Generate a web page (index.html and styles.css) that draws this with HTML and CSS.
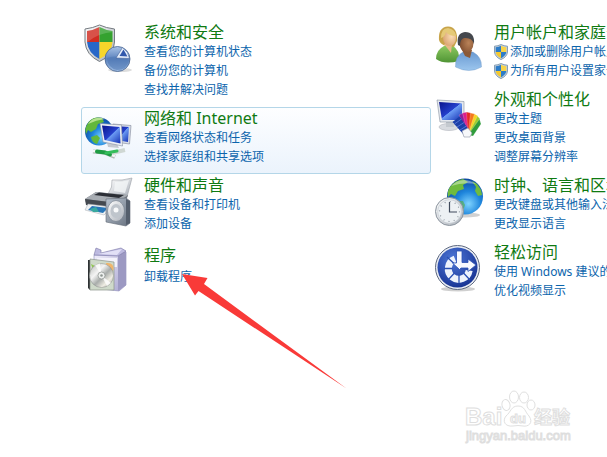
FILE: index.html
```html
<!DOCTYPE html>
<html lang="zh-CN">
<head>
<meta charset="utf-8">
<meta name="viewport" content="width=device-width, initial-scale=1">
<title>控制面板</title>
<link rel="stylesheet" href="styles.css">
</head>
<body>
<svg class="defs" width="0" height="0" aria-hidden="true">
  <defs>
    <radialGradient id="sea" cx=".6" cy=".7" r=".75"><stop offset="0" stop-color="#7fd4ff"/><stop offset=".45" stop-color="#1f86dc"/><stop offset="1" stop-color="#0b3f96"/></radialGradient>
    <linearGradient id="screen" x1="0" y1="0" x2="1" y2="1"><stop offset="0" stop-color="#0a128c"/><stop offset=".5" stop-color="#2440cc"/><stop offset=".52" stop-color="#6c9cf4"/><stop offset="1" stop-color="#1430b4"/></linearGradient>
    <linearGradient id="silver" x1="0" y1="0" x2="1" y2="1"><stop offset="0" stop-color="#ffffff"/><stop offset="1" stop-color="#a9afb8"/></linearGradient>
    <linearGradient id="steel" x1="0" y1="0" x2="1" y2="1"><stop offset="0" stop-color="#b9c3cf"/><stop offset="1" stop-color="#67717f"/></linearGradient>
    <linearGradient id="pie" x1="0" y1="0" x2="0" y2="1"><stop offset="0" stop-color="#a9c3e6"/><stop offset=".5" stop-color="#5b82bd"/><stop offset="1" stop-color="#9dbbe2"/></linearGradient>
    <linearGradient id="lilac" x1="0" y1="0" x2="1" y2="1"><stop offset="0" stop-color="#f1effc"/><stop offset="1" stop-color="#a9a6d0"/></linearGradient>
    <linearGradient id="disc" x1="0" y1="0" x2="1" y2="1"><stop offset="0" stop-color="#b4b8b4"/><stop offset=".35" stop-color="#f4f4f4"/><stop offset=".55" stop-color="#a8acaa"/><stop offset=".75" stop-color="#eeece2"/><stop offset="1" stop-color="#999a98"/></linearGradient>
    <radialGradient id="access" cx=".4" cy=".3" r=".8"><stop offset="0" stop-color="#4e78d8"/><stop offset="1" stop-color="#122c8c"/></radialGradient>
    <linearGradient id="green" x1="0" y1="0" x2="0" y2="1"><stop offset="0" stop-color="#8cc860"/><stop offset="1" stop-color="#4f9434"/></linearGradient>
    <linearGradient id="blue" x1="0" y1="0" x2="0" y2="1"><stop offset="0" stop-color="#6a9ad2"/><stop offset="1" stop-color="#9cc6ee"/></linearGradient>
    <radialGradient id="skin" cx=".65" cy=".4" r=".7"><stop offset="0" stop-color="#fbdcb4"/><stop offset="1" stop-color="#d8a270"/></radialGradient>
    <radialGradient id="tan" cx=".65" cy=".5" r=".7"><stop offset="0" stop-color="#b98258"/><stop offset="1" stop-color="#7c4a2c"/></radialGradient>
    <clipPath id="shield-clip"><path d="M15.500 3Q21 6 28.500 7V18Q28 29 15.500 35Q4 29 3 18V7Q10 6 15.500 3Z"/></clipPath>
    <symbol id="uac" viewBox="0 0 14 16">
      <path d="M7 .5Q10 2 13.500 2.200V8Q13 13 7 15.600Q1 13 .5 8V2.200Q4 2 7 .5Z" fill="#c4d0dc" stroke="#6f8ba4" stroke-width=".8"/>
      <path d="M7 1.800V8H1.700V3.300Q5 3 7 1.800Z" fill="#2d7cc8"/>
      <path d="M7 1.800V8H12.300V3.300Q9 3 7 1.800Z" fill="#f8d448"/>
      <path d="M1.700 8H7V14.200Q2.300 12 1.700 8Z" fill="#f5c92e"/>
      <path d="M12.300 8H7V14.200Q11.700 12 12.300 8Z" fill="#2d7cc8"/>
    </symbol>
  </defs>
</svg>

<main class="panel">
  <div class="column">
    <section class="category">
      <svg class="icon" viewBox="0 0 48 48" aria-hidden="true">
        <ellipse cx="36" cy="46" rx="12" ry="2" fill="#bbb" opacity=".5"/>
        <path d="M15.500 1Q22 4 30.500 5V18Q30 31 15.500 37.500Q2 31 1 18V5Q9 4 15.500 1Z" fill="url(#silver)" stroke="#757b81" stroke-width="1"/>
        <g clip-path="url(#shield-clip)">
          <path d="M0 0H15.500V18H0Z" fill="#d02c22"/><path d="M15.500 0H31V18H15.500Z" fill="#35a22f"/>
          <path d="M0 18H15.500V38H0Z" fill="#2867c8"/><path d="M15.500 18H31V38H15.500Z" fill="#f6d62a"/>
          <path d="M0 0H31V8Q14 8 0 21Z" fill="#fff" opacity=".18"/>
        </g>
        <circle cx="33.500" cy="35" r="12.500" fill="url(#pie)" stroke="#48658f" stroke-width=".8"/>
        <path d="M23 34Q32 30 45 36Q43 46 33 46Q24 44 23 34Z" fill="#4c75b2" opacity=".5"/>
        <path d="M32 34L38.500 23.500Q45 28 45.500 34.500Z" fill="#e7effa" stroke="#425f9a" stroke-width=".6"/>
        <path d="M35.500 32L39.500 25.500L43.500 32.500Z" fill="#3158ac"/>
      </svg>
      <div class="body">
        <h2><a href="#">系统和安全</a></h2>
        <ul>
          <li><a href="#">查看您的计算机状态</a></li>
          <li><a href="#">备份您的计算机</a></li>
          <li><a href="#">查找并解决问题</a></li>
        </ul>
      </div>
    </section>

    <section class="category is-hot">
      <svg class="icon" viewBox="0 0 48 48" aria-hidden="true">
        <circle cx="15" cy="21.500" r="14" fill="url(#sea)"/>
        <path d="M4 13Q9 6 18 8L20 12L14 14L12 19L7 22L4 20L2 24Q0 19 4 13Z" fill="#62b83c"/>
        <path d="M7 27L13 25L16 28L13 34Q8 33 7 27Z" fill="#62b83c"/>
        <path d="M4 14Q10 5 21 9Q12 10 4 14Z" fill="#d9f4b4" opacity=".7"/>
        <path d="M29 14L47 15.500L45.500 34L31 32Z" fill="#d8dde8" stroke="#7f8798" stroke-width=".6"/>
        <path d="M31 16L45 17L44 32L32 30Z" fill="url(#screen)"/>
        <path d="M23 33L33 34L35 38L24 37Z" fill="#c5cad1"/>
        <path d="M16 13.500L37.500 15L38.500 36L19 32Z" fill="#edf0f5" stroke="#858da0" stroke-width=".6"/>
        <path d="M18 15.500L35.800 17L36.500 33.500L20.500 30Z" fill="url(#screen)"/>
        <path d="M9 41.500L20 42.500L31 47" fill="none" stroke="#b4bbb8" stroke-width="4"/>
        <path d="M9 41L20 42L31 46" fill="none" stroke="#f6f8f7" stroke-width="2.500"/>
        <path d="M13 41.500L21 42.500L26 44.500" fill="none" stroke="#1f9c44" stroke-width="4" stroke-linecap="round"/>
        <path d="M28 43L41 40" stroke="#cfd7d3" stroke-width="4"/>
        <path d="M22 43L33 41" stroke="#35bd5b" stroke-width="3" stroke-linecap="round"/>
      </svg>
      <div class="body">
        <h2><a href="#">网络和 Internet</a></h2>
        <ul>
          <li><a href="#">查看网络状态和任务</a></li>
          <li><a href="#">选择家庭组和共享选项</a></li>
        </ul>
      </div>
    </section>

    <section class="category">
      <svg class="icon" viewBox="0 0 48 48" aria-hidden="true">
        <path d="M28 3Q38 4 48 1L43 20L24 17Q29 10 28 3Z" fill="url(#silver)" stroke="#9a9fa6" stroke-width=".6"/>
        <path d="M31 5Q38 5 45 3L41 16L30 14Z" fill="#f4f6f8" opacity=".8"/>
        <path d="M1 22L12 15L44 18L40 30L22 32L2 26Z" fill="#777c83"/>
        <path d="M1 22L12 15L44 18L33 26Z" fill="#a8adb3"/>
        <path d="M10 18L15 15.500L40 18L35 21Z" fill="#2c2f36"/>
        <path d="M1 22L33 26L32 36L2 28Z" fill="#444950"/>
        <path d="M4 27L28 30L20 38L1 33Z" fill="#f0f2f4" stroke="#a5abb0" stroke-width=".5"/>
        <path d="M8 29L24 31L19 36L4 33Z" fill="#2876b8"/>
        <path d="M6 32L12 30L15 35L9 35Z" fill="#39a9a0"/>
        <path d="M22 22L42 21L46 24V46L42 49L22 45Z" fill="url(#steel)" stroke="#616a76" stroke-width=".6"/>
        <path d="M42 22L46 24V46L42 48Z" fill="#545e6c"/>
        <ellipse cx="32" cy="34" rx="8.500" ry="10.500" fill="url(#silver)" stroke="#78828f" stroke-width=".7"/>
        <ellipse cx="32" cy="34" rx="5.500" ry="7" fill="#bfc5cc"/>
        <circle cx="32" cy="33" r="2.500" fill="#f9fafb"/>
      </svg>
      <div class="body">
        <h2><a href="#">硬件和声音</a></h2>
        <ul>
          <li><a href="#">查看设备和打印机</a></li>
          <li><a href="#">添加设备</a></li>
        </ul>
      </div>
    </section>

    <section class="category is-short">
      <svg class="icon" viewBox="0 0 48 48" aria-hidden="true">
        <path d="M10 8L33 8L42 5V38L35 44L10 41Z" fill="url(#lilac)" stroke="#8c89b8" stroke-width=".6"/>
        <path d="M34 9L42 4V38L34 44Z" fill="#9c99c2"/>
        <path d="M10 8L12 1L17 3V6L37 1L42 4L34 9Z" fill="#bdbae0" stroke="#7a77a6" stroke-width=".6"/>
        <path d="M14 7L38 2L33 8Z" fill="#e2e0f6"/>
        <path d="M13 11H33V20H13Z" fill="#f4f3fc"/>
        <path d="M4 13L6 13V43L4 41Z" fill="#2d3133"/>
        <path d="M6 12L30 15V43L6 43Z" fill="#cfdaca" stroke="#8b948b" stroke-width=".7"/>
        <path d="M22 16Q31 15 29 24L23 22Z" fill="#f0b56c"/>
        <path d="M7 17L13 20L10 25Z" fill="#8fc94f"/>
        <circle cx="17.500" cy="28.500" r="12" fill="url(#disc)" stroke="#868b88" stroke-width=".5"/>
        <path d="M17.500 28.500L11 18L16 16.500Z" fill="#fff" opacity=".8"/>
        <path d="M17.500 28.500L27 36L23 39Z" fill="#fff" opacity=".8"/>
        <circle cx="17.500" cy="28.500" r="3.500" fill="#eff1ef" stroke="#7b817d" stroke-width=".6"/>
        <circle cx="17.500" cy="28.500" r="1.300" fill="#8f9792"/>
      </svg>
      <div class="body">
        <h2><a href="#">程序</a></h2>
        <ul>
          <li><a href="#">卸载程序</a></li>
        </ul>
      </div>
    </section>
  </div>

  <div class="column">
    <section class="category">
      <svg class="icon" viewBox="0 0 48 48" aria-hidden="true">
        <path d="M2 35Q2 26 10 22L19 22Q26 26 25 37Q10 41 2 35Z" fill="url(#green)"/>
        <path d="M5 16Q4 3 14 2.500Q24 3 23 17L20 23L12 22Q6 20 5 16Z" fill="#c8a44a"/>
        <path d="M10 20L18 20L17 29Z" fill="#e6b886"/>
        <ellipse cx="15.500" cy="14" rx="6.500" ry="8" fill="url(#skin)"/>
        <path d="M7 14Q7 4 14 4Q21 5 22 12Q15 12 12 8Q11 13 7 14Z" fill="#e5ca78"/>
        <path d="M21.500 43Q21 32 29 28L39 28Q48 33 47.500 43Q35 50 21.500 43Z" fill="url(#blue)" stroke="#6a96c6" stroke-width=".4"/>
        <path d="M28 26H38L36 34L31 32Z" fill="#8b5a38"/>
        <ellipse cx="32.500" cy="19" rx="7" ry="9.500" fill="url(#tan)"/>
        <path d="M24 21Q22 9 31 8Q41 8 40 20Q38 13 30 14Q26 15 26 22Z" fill="#44474d"/>
      </svg>
      <div class="body">
        <h2><a href="#">用户帐户和家庭安全</a></h2>
        <ul>
          <li><svg class="badge" aria-hidden="true"><use href="#uac"/></svg><a href="#">添加或删除用户帐户</a></li>
          <li><svg class="badge" aria-hidden="true"><use href="#uac"/></svg><a href="#">为所有用户设置家长控制</a></li>
        </ul>
      </div>
    </section>

    <section class="category">
      <svg class="icon" viewBox="0 0 48 48" aria-hidden="true">
        <ellipse cx="15" cy="36" rx="10" ry="3.500" fill="#d8dbe0" stroke="#a6abb3" stroke-width=".5"/>
        <path d="M12 30H19L20 36H12Z" fill="#c4c9cf"/>
        <path d="M3 9L30 10.500L30 31L6 31Z" fill="#e4e8ee" stroke="#8790a0" stroke-width=".6"/>
        <path d="M5 11L28 12.500L28 29L8 29Z" fill="url(#screen)"/>
        <g stroke="#fff" stroke-width=".2">
          <path d="M34 44L25 24L29 22L36 42Z" fill="#8b1f9c"/>
          <path d="M34 44L28.500 22L33 21L36 42Z" fill="#dc1f8c"/>
          <path d="M34 44L32.500 21L37 22L37 42Z" fill="#e62a24"/>
          <path d="M34 44L36.500 22L41 23L38 43Z" fill="#f47a1c"/>
          <path d="M34 44L40.500 23L44 25L38 43Z" fill="#f6d322"/>
          <path d="M34 44L43.500 25L46 28L38 44Z" fill="#9ccc2c"/>
          <path d="M34 44L45.500 28L47 33L39 45Z" fill="#2f9c3a"/>
        </g>
        <path d="M18.500 31L25.500 25.500L35 39L30 44Z" fill="#1c3fa8"/>
        <path d="M20.500 33L27.500 28M23 36L30 31.500M26 39L32.500 35" stroke="#5f80dc" stroke-width=".8"/>
        <path d="M28 40L34 37L38 42L36 46L30 46Z" fill="#f7f8fa" stroke="#8f96a5" stroke-width=".6"/>
      </svg>
      <div class="body">
        <h2><a href="#">外观和个性化</a></h2>
        <ul>
          <li><a href="#">更改主题</a></li>
          <li><a href="#">更改桌面背景</a></li>
          <li><a href="#">调整屏幕分辨率</a></li>
        </ul>
      </div>
    </section>

    <section class="category">
      <svg class="icon" viewBox="0 0 48 48" aria-hidden="true">
        <ellipse cx="31" cy="38" rx="15" ry="2.500" fill="#999" opacity=".45"/>
        <circle cx="31" cy="19.500" r="18" fill="url(#sea)"/>
        <path d="M16 10Q21 3 29 2L34 5L29 8L30 12L24 14L21 19L17 17L14 20Q13 14 16 10Z" fill="#6fbb3e"/>
        <path d="M38 4L43 7L47 13L48 18L44 19L41 14L42 10Z" fill="#6fbb3e"/>
        <path d="M23 24L29 24L31 28L29 34L25 33Z" fill="#57aa3d" opacity=".6"/>
        <path d="M17 9Q28 -2 42 7Q29 5 17 9Z" fill="#fff" opacity=".4"/>
        <circle cx="15.500" cy="34.500" r="14" fill="url(#silver)" stroke="#8b949e" stroke-width="1"/>
        <circle cx="15.500" cy="34.500" r="11.800" fill="#edf1f4" stroke="#c1c8cf" stroke-width=".6"/>
        <circle cx="15.500" cy="34.500" r="10" fill="none" stroke="#76808c" stroke-width="1.200" stroke-dasharray=".8 4.436"/>
        <path d="M15.500 25V35H23" fill="none" stroke="#404b5c" stroke-width="1.200"/>
      </svg>
      <div class="body">
        <h2><a href="#">时钟、语言和区域</a></h2>
        <ul>
          <li><a href="#">更改键盘或其他输入法</a></li>
          <li><a href="#">更改显示语言</a></li>
        </ul>
      </div>
    </section>

    <section class="category">
      <svg class="icon" viewBox="0 0 48 48" aria-hidden="true">
        <ellipse cx="24" cy="45" rx="17" ry="2.500" fill="#888" opacity=".4"/>
        <circle cx="23.500" cy="23.500" r="22" fill="#e9edf4" stroke="#5d6880" stroke-width="1"/>
        <circle cx="23.500" cy="23.500" r="20" fill="url(#access)"/>
        <path d="M35.200 26.500A10.500 10.500 0 1 1 21 15" fill="none" stroke="#eef3fc" stroke-width="7"/>
        <g stroke="#2a50b4" stroke-width="1.300"><path d="M20.500 20L13 13M18.500 24.500H10M20.500 29L14 36M25 31V39M29.500 29L36 36"/></g>
        <path d="M22.500 7H28V18.500H34V15L42 21L34 27.500V24H27L25.500 25.500L18.500 19H22.500Z" fill="#f8faff" stroke="#2a50b4" stroke-width=".8"/>
      </svg>
      <div class="body">
        <h2><a href="#">轻松访问</a></h2>
        <ul>
          <li><a href="#">使用 Windows 建议的设置</a></li>
          <li><a href="#">优化视频显示</a></li>
        </ul>
      </div>
    </section>
  </div>

  <svg class="arrow" viewBox="0 0 166 116" aria-hidden="true">
    <path d="M1 1L26.500 5L23 11L165.500 115.500L17.500 18L14 22.500Z" fill="#f93a38"/>
  </svg>
</main>

<svg class="watermark" viewBox="0 0 116 62" role="img" aria-label="Baidu 经验">
  <g fill="#fff" stroke="#e0e0e0" stroke-width="1">
    <ellipse cx="43" cy="20" rx="4" ry="5.500" transform="rotate(-12 43 20)"/>
    <ellipse cx="51" cy="12" rx="4.500" ry="6"/>
    <ellipse cx="61" cy="12.500" rx="4.500" ry="5.500"/>
    <ellipse cx="68" cy="20" rx="4" ry="5"/>
    <path d="M55 21C62 21 62 27 66 31C71 38 65 42 60 41Q55 40 50 41C42 42 39 36 43 31C48 27 48 21 55 21Z"/>
  </g>
  <g class="mark">
    <text x="2" y="40" class="brand">Bai</text>
    <text x="47" y="38" class="paw">du</text>
    <text x="71" y="39" class="word">经验</text>
    <text x="3" y="55" class="site">jingyan.baidu.com</text>
  </g>
</svg>
</body>
</html>
```

FILE: styles.css
```css
* {
  box-sizing: border-box;
}

body {
  margin: 0;
  min-height: 100vh;
  overflow: hidden;
  background: #fff;
  font: 12px/19px "Noto Sans", "Noto Sans CJK SC", sans-serif;
}

.defs {
  position: absolute;
}

.panel {
  position: relative;
  display: grid;
  grid-template-columns: repeat(2, 350px);
  padding: 21px 0 0 81px;
}

.category {
  display: flex;
  align-items: flex-start;
  gap: 12px;
  padding: 0 2px 7px;
  border: 1px solid transparent;
  border-radius: 3px;
}

.category.is-hot {
  border-color: #b4d6e8;
  background: linear-gradient(#fdfeff, #ebf3fc);
}

.category.is-short {
  margin-top: 3px;
}

.is-short ul {
  padding-top: 2px;
}

.icon {
  flex: none;
  width: 48px;
  height: 48px;
  margin-top: 2px;
  overflow: visible;
}

.body {
  white-space: nowrap;
}

h2 {
  margin: 0;
  font-size: 16px;
  font-weight: 400;
  line-height: 20px;
}

h2 a {
  color: #0f7a12;
}

ul {
  margin: 0;
  padding: 0;
  list-style: none;
}

li {
  display: flex;
  align-items: center;
  gap: 2px;
  height: 19px;
}

li a {
  color: #0b64ac;
}

a {
  text-decoration: none;
}

a:hover {
  text-decoration: underline;
}

.badge {
  width: 14px;
  height: 16px;
}

.arrow {
  position: absolute;
  left: 181px;
  top: 273px;
  width: 166px;
  height: 116px;
  pointer-events: none;
}

.watermark {
  position: absolute;
  right: 28px;
  bottom: 10px;
  width: 116px;
  height: 62px;
}

.mark {
  fill: #fff;
  stroke: #dedede;
  stroke-width: 1px;
  font-family: "Liberation Sans", "Noto Sans CJK SC", sans-serif;
}

.brand {
  font-size: 24px;
  font-weight: 700;
}

.paw {
  font-size: 13px;
  font-weight: 700;
}

.word {
  font-size: 18px;
  font-weight: 700;
}

.site {
  font-size: 13px;
}
```
